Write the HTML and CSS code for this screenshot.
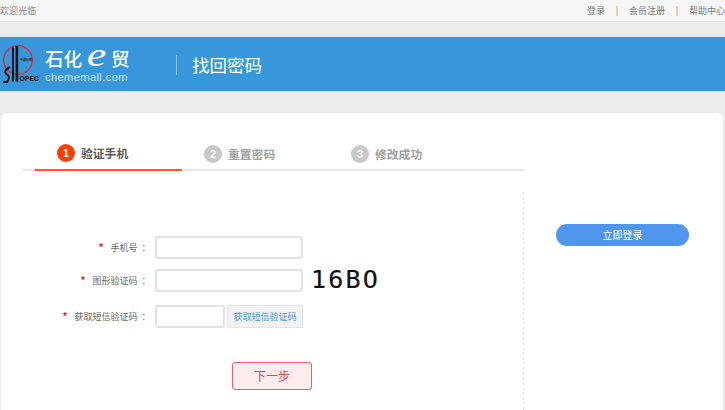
FILE: index.html
```html
<!DOCTYPE html>
<html lang="zh">
<head>
<meta charset="utf-8">
<title>找回密码</title>
<link rel="stylesheet" href="styles.css">
</head>
<body>
<div class="topbar">
  <span class="welcome">欢迎光临</span>
  <nav class="toplinks">
    <a>登录</a><i>|</i><a>会员注册</a><i>|</i><a>帮助中心</a>
  </nav>
</div>
<header class="banner">
  <svg class="logo" width="44" height="40" viewBox="0 0 44 40">
    <circle cx="16" cy="16" r="14.3" fill="none" stroke="#e8212b" stroke-width="1.3"/>
    <path d="M10 3.500h2v34h-2zM13.600 2h2.600v35.500h-2.600z" fill="#111"/>
    <path d="M8 23c-4 2-6 4-4 6.500s5 3 1 8.500H1" fill="none" stroke="#111" stroke-width="2"/>
    <text x="18" y="17" class="logo-cn" textLength="12" lengthAdjust="spacingAndGlyphs">中国石化</text>
    <text x="17.500" y="37" class="logo-opec" textLength="19.500" lengthAdjust="spacingAndGlyphs">OPEC</text>
  </svg>
  <div class="brand">
    <div class="brand-cn">石化<em>e</em>贸</div>
    <div class="brand-en">chememall.com</div>
  </div>
  <div class="page-title">找回密码</div>
</header>
<main class="card">
  <div class="left">
    <ol class="steps">
      <li class="step active"><b>1</b>验证手机</li>
      <li class="step"><b>2</b>重置密码</li>
      <li class="step"><b>3</b>修改成功</li>
    </ol>
    <form class="form">
      <div class="row"><label><s>*</s>手机号&nbsp;&nbsp;：</label><span class="input wide"></span></div>
      <div class="row"><label><s>*</s>图形验证码&nbsp;&nbsp;：</label><span class="input wide"></span><span class="captcha">16BO</span></div>
      <div class="row third"><label><s>*</s>获取短信验证码&nbsp;&nbsp;：</label><span class="input short"></span><span class="sms">获取短信验证码</span></div>
      <div class="next">下一步</div>
    </form>
  </div>
  <aside class="right"><a class="login">立即登录</a></aside>
</main>
</body>
</html>
```
FILE: styles.css
```css
* { box-sizing: border-box; }
html, body { height: 410px; overflow: hidden; }
body { margin: 0; background: #ececec; font-family: "Noto Sans CJK SC", sans-serif; color: #666; }
.topbar { height: 22px; background: #f6f6f6; border-bottom: 1px solid #e4e4e4; display: flex; justify-content: space-between; align-items: center; font-size: 9px; color: #888; }
.toplinks { display: flex; color: #777; }
.toplinks i { font-style: normal; margin: 0 10.750px; color: #888; }
.toplinks a { white-space: nowrap; }
.banner { margin-top: 14px; height: 56px; background: #3896da; border-top: 1px solid #dfe9f0; border-bottom: 1px solid #d5e5f0; display: flex; align-items: center; color: #fff; padding-left: 2px; }
.logo { flex: none; }
.logo-opec { font: bold 8px "Liberation Sans", sans-serif; fill: #111; }
.logo-cn { font: bold 3px "Noto Sans CJK SC", sans-serif; fill: #222; }
.brand { margin-left: -1px; width: 85px; }
.brand-cn { font: 500 18.500px/22px "Noto Sans CJK SC", sans-serif; height: 22px; white-space: nowrap; }
.brand-cn em { display: inline-block; width: 29px; text-align: center; font: italic 34px/22px "Liberation Serif", serif; transform: scaleX(1.3); }
.brand-en { font: 11px/14px "Liberation Sans", sans-serif; color: #cfe6f7; letter-spacing: .45px; margin-top: 4px; white-space: nowrap; }
.page-title { margin-left: 46px; padding-left: 15px; border-left: 1px solid #8cc3ea; height: 20px; line-height: 20px; font-size: 17.500px; white-space: nowrap; margin-top: 1px; }
.card { margin: 21px 2px 0 1px; height: 297px; background: #fff; border-radius: 6px 6px 0 0; display: flex; padding-left: 22px; }
.left { width: 500px; flex: none; }
.steps { list-style: none; margin: 0 -1px 0 0; padding: 22px 0 0 12px; height: 58px; border-bottom: 2px solid #e5e5e5; display: flex; }
.step { width: 147px; height: 36px; padding-left: 22px; display: flex; align-items: center; gap: 6px; font-size: 11.800px; color: #a0a0a0; font-weight: 700; margin-bottom: -2px; flex: none; }
.step b { width: 18px; height: 18px; margin-top: 2px; border-radius: 50%; background: #c8c8c8; color: #fff; font: bold 11px/18px "Liberation Sans", sans-serif; text-align: center; flex: none; }
.step.active { color: #5a5a5a; border-bottom: 2px solid #ff5a22; }
.step.active b { background: #ff3d00; }
.form { display: block; padding-top: 64px; }
.row { display: flex; align-items: center; height: 24px; margin-bottom: 9px; }
.row.third { margin-top: 12px; }
.row label { width: 132px; flex: none; text-align: right; padding: 0 4.500px 2px 0; font-size: 9px; color: #666; white-space: nowrap; }
.row label s { text-decoration: none; color: #e8212b; margin-right: 7px; font-size: 10px; font-weight: 700; }
.input { display: block; height: 23px; border: 2px solid #e2e2e2; border-radius: 3px; background: #fff; }
.wide { width: 148px; }
.short { width: 70px; margin-right: 2px; }
.captcha { margin-left: 8px; font: 25px/24px "DejaVu Sans Mono", monospace; letter-spacing: 2.200px; color: #111; -webkit-text-stroke: .2px #111; }
.sms { width: 76px; height: 23px; background: #f2f2f2; border: 1px solid #e4e4e4; border-radius: 2px; color: #4a94d6; font-size: 9px; line-height: 21px; text-align: center; white-space: nowrap; }
.next { width: 80px; height: 28px; margin: 34px 0 0 209px; background: #ffecec; border: 1.500px solid #e0606c; border-radius: 3px; color: #d8454f; font-size: 12px; line-height: 25px; text-align: center; }
.right { flex: 1; margin-top: 79px; border-left: 1px dashed #e2e2e2; padding: 32px 0 0 32px; }
.login { display: block; width: 133px; height: 22px; border-radius: 11px; background: #4f97ee; color: #fff; font-size: 10px; line-height: 22px; text-align: center; }
```
